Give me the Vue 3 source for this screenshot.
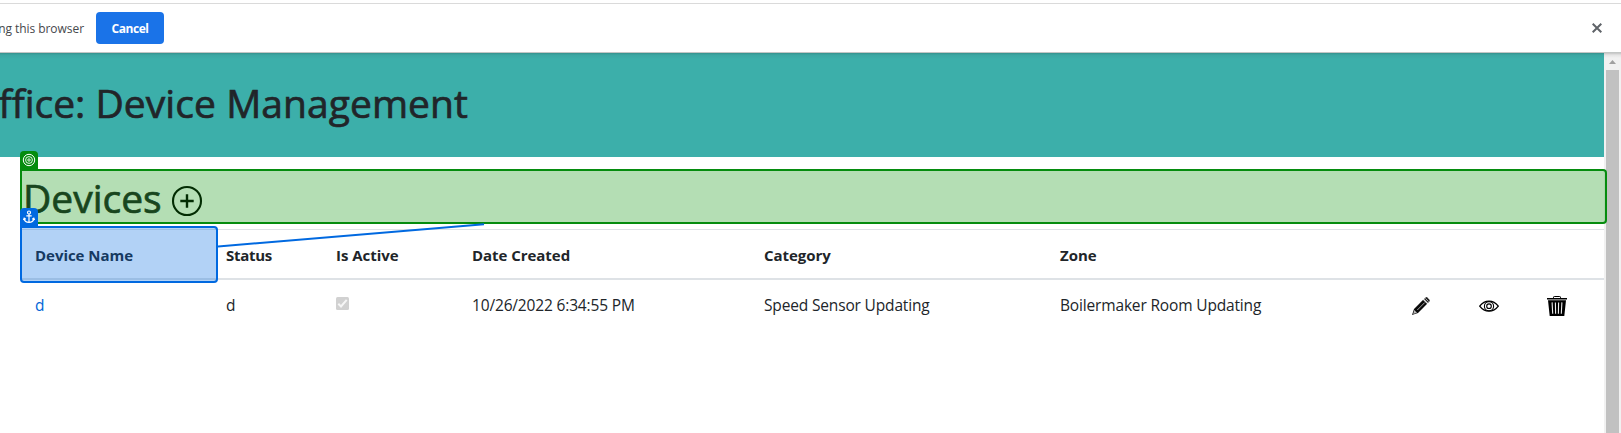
<script setup>
const headings = [
  { text: 'Device Name', cls: 'name' },
  { text: 'Status', cls: 'status' },
  { text: 'Is Active', cls: 'active' },
  { text: 'Date Created', cls: 'date' },
  { text: 'Category', cls: 'category' },
  { text: 'Zone', cls: 'zone' },
]
</script>

<template>
  <div class="window">
    <div class="infobar">
      <div class="info-text"><span>ng this browser</span></div>
      <button class="cancel"><span>Cancel</span></button>
      <svg class="close" width="10" height="10" viewBox="0 0 10 10">
        <path d="M.7.7 9.3 9.3M9.3.7.7 9.3" stroke="#5f6368" stroke-width="2" />
      </svg>
    </div>
    <div class="viewport">
      <main class="page">
        <header class="banner">
          <h1><span>ffice: </span><span class="title-main">Device Management</span></h1>
        </header>
        <section class="devices">
          <div class="section-head">
            <h1><span>Devices</span></h1>
            <svg class="plus" width="32" height="32" viewBox="0 0 32 32" fill="none" stroke="#000">
              <circle cx="16" cy="16" r="14" stroke-width="2.1" />
              <path d="M16 9.3v13.4M9.3 16h13.4" stroke-width="2.4" />
            </svg>
            <div class="target-box">
              <div class="tag">
                <svg width="14" height="14" viewBox="0 0 14 14" fill="none" stroke="#fff">
                  <circle cx="7" cy="7" r="5.7" />
                  <circle cx="7" cy="7" r="3.4" stroke-width=".9" />
                  <circle cx="7" cy="7" r="1.2" stroke-width=".9" />
                </svg>
              </div>
            </div>
          </div>
          <div class="table">
            <div class="row head">
              <div v-for="h in headings" :key="h.text" class="cell"><span :class="h.cls">{{ h.text }}</span></div>
              <div class="anchor-box">
                <div class="tag">
                  <svg width="14" height="14" viewBox="0 0 14 14" fill="none" stroke="#fff" stroke-width="1.2">
                    <circle cx="7" cy="2.5" r="1.5" />
                    <path d="M7 4v8.5M4.3 5.8h5.4M2.2 8.6C2.6 11.2 4.6 12.4 7 12.4s4.4-1.2 4.8-3.8M1.4 10 2.2 8.2l1.6 1.1M12.6 10l-.8-1.8-1.6 1.1" />
                  </svg>
                </div>
              </div>
            </div>
            <div class="row body">
              <div class="cell"><a>d</a></div>
              <div class="cell"><span>d</span></div>
              <div class="cell">
                <svg class="check" width="13" height="13" viewBox="0 0 13 13">
                  <rect width="13" height="13" rx="1.5" fill="#d1d1d1" />
                  <path d="M2.3 6.8 5 9.5 10.7 2.9" fill="none" stroke="#f6f6f6" stroke-width="2" />
                </svg>
              </div>
              <div class="cell"><span class="v-date">10/26/2022 6:34:55 PM</span></div>
              <div class="cell"><span class="v-category">Speed Sensor Updating</span></div>
              <div class="cell"><span class="v-zone">Boilermaker Room Updating</span></div>
              <div class="cell icon">
                <svg width="20" height="20" viewBox="0 0 20 20">
                  <path d="M3 13 12.2 3.8l4 4L7 17 1 19z" fill="#0a0a0a" />
                  <path d="m13 3 1.7-1.6q.8-.6 1.6.1l2.2 2.2q.6.7 0 1.5L17 7z" fill="#222" />
                  <path d="m12.3 3.7 4 4M14.3 2.3l3.3 3.3" stroke="#ddd" stroke-width=".7" />
                  <path d="m6.3 14 7.4-7.4" stroke="#bbb" stroke-width=".9" />
                  <path d="m3.3 14 2.7 2.7-3.8 1.2z" fill="#bbb" />
                </svg>
              </div>
              <div class="cell icon">
                <svg width="20" height="20" viewBox="0 0 20 20" fill="none" stroke="#000">
                  <path d="M.7 10.2Q4.5 5.2 10 5.2t9.3 5Q15.5 15.2 10 15.2T.7 10.2z" stroke-width="1.3" />
                  <circle cx="10" cy="10.2" r="4.6" stroke-width="1.1" />
                  <circle cx="10" cy="10.2" r="2.3" stroke-width="1.1" />
                </svg>
              </div>
              <div class="cell icon">
                <svg width="20" height="20" viewBox="0 0 20 20">
                  <path d="M6.5 2.5V1.2q0-.7.8-.7h5.4q.8 0 .8.7v1.3" fill="none" stroke="#000" />
                  <path d="M0 2h20v1.4H0zM1 4.2h18L17.3 20H2.7z" fill="#000" />
                  <path d="m5.1 6.4.6 11.4M8.4 6.4l.2 11.4M11.6 6.4l-.2 11.4M14.9 6.4l-.6 11.4" stroke="#eee" stroke-width="1.1" />
                </svg>
              </div>
            </div>
          </div>
          <svg class="connector" width="270" height="28" viewBox="0 0 270 28">
            <path d="M0 25.5 266 3.3" stroke="#0069e0" stroke-width="2" />
          </svg>
        </section>
      </main>
      <div class="scrollbar">
        <svg width="7" height="4" viewBox="0 0 7 4"><path d="M3.5 0 7 4H0z" fill="#a0a0a0" /></svg>
        <div class="thumb"></div>
      </div>
    </div>
  </div>
</template>

<style>
body { background: #fff; }
</style>

<style scoped>
.window {
  width: 1621px;
  height: 433px;
  box-sizing: border-box;
  padding-top: 3px;
  overflow: hidden;
  display: flex;
  flex-direction: column;
  background: #fff;
  font-family: "Open Sans", "Noto Sans", sans-serif;
  color: #212529;
}
.infobar {
  height: 50px;
  box-sizing: border-box;
  border-top: 1px solid #dadada;
  border-bottom: 1px solid #c3c6c5;
  display: flex;
  align-items: center;
  padding-right: 19px;
}
.info-text {
  width: 84px;
  display: flex;
  justify-content: flex-end;
  white-space: nowrap;
  font-size: 12px;
  letter-spacing: -0.05px;
  color: #46484c;
}
.info-text span { flex: none; }
.cancel {
  margin: 0 0 0 12px;
  width: 68px;
  height: 32px;
  padding: 0;
  border: 0;
  border-radius: 4px;
  background: #1a73e8;
  color: #fff;
  font: 700 12px "Open Sans", sans-serif;
  letter-spacing: -0.45px;
}
.close { margin-left: auto; }
.viewport {
  flex: 1;
  display: flex;
  min-height: 0;
}
.page { width: 1604px; }
.banner {
  height: 104px;
  box-sizing: border-box;
  padding-bottom: 4px;
  background: linear-gradient(#35918d 0, #3ba7a3 2px, #3cafaa 6px);
  display: flex;
  align-items: center;
}
h1 {
  margin: 0;
  font-size: 39px;
  font-weight: 500;
  line-height: 48px;
  white-space: nowrap;
  -webkit-text-stroke: .7px #212529;
}
.banner h1 {
  width: 468px;
  display: flex;
  justify-content: flex-end;
  white-space: pre;
}
.title-main { letter-spacing: .06px; }
.devices { position: relative; padding: 12px 0 0 20px; }
.section-head {
  position: relative;
  height: 55px;
  display: flex;
  align-items: center;
  padding-left: 3px;
}
.section-head h1 { padding-top: 3px; }
.plus { margin: 9px 0 0 9px; }
.target-box, .anchor-box {
  position: absolute;
  box-sizing: border-box;
  border-radius: 0 4px 4px 4px;
}
.target-box {
  left: 0;
  top: 0;
  width: 1587px;
  height: 55px;
  border: 2px solid #058c0e;
  background: rgba(5, 145, 5, .3);
}
.anchor-box {
  left: 0;
  top: -4px;
  width: 198px;
  height: 57px;
  border: 2px solid #0069e0;
  background: rgba(0, 105, 225, .3);
}
.tag {
  position: absolute;
  left: -2px;
  top: -20px;
  width: 18px;
  height: 20px;
  display: flex;
  justify-content: center;
  padding-top: 2px;
  box-sizing: border-box;
  border-radius: 4px 4px 0 0;
}
.target-box .tag { background: #058c0e; }
.anchor-box .tag { background: #0069e0; }
.table { margin-top: 5px; }
.row {
  position: relative;
  display: grid;
  grid-template-columns: 191px 110px 136px 292px 296px 350px 68px 68px 57px;
  padding-left: 15px;
  align-items: center;
  font-size: 15.5px;
  letter-spacing: -0.16px;
  white-space: nowrap;
}
.head {
  height: 51px;
  box-sizing: border-box;
  padding-top: 2px;
  border-top: 1px solid #dee2e6;
  border-bottom: 2px solid #dee2e6;
  font-weight: 700;
  font-size: 15px;
  letter-spacing: -0.04px;
}
.status { letter-spacing: -0.3px; }
.body { height: 49px; }
.cell { display: flex; align-items: center; }
a { color: #0366d6; }
.check { margin-top: -2px; }
.icon { padding: 3px 0 0 1px; }
.connector { position: absolute; left: 218px; top: 64px; }
.scrollbar {
  width: 17px;
  background: linear-gradient(#c4c4c4 0, #e4e4e4 2px, #f1f1f1 5px);
  display: flex;
  flex-direction: column;
  align-items: center;
  padding-top: 7px;
  box-sizing: border-box;
}
.thumb { flex: 1; width: 13px; margin-top: 6px; background: #c1c1c1; }
</style>
